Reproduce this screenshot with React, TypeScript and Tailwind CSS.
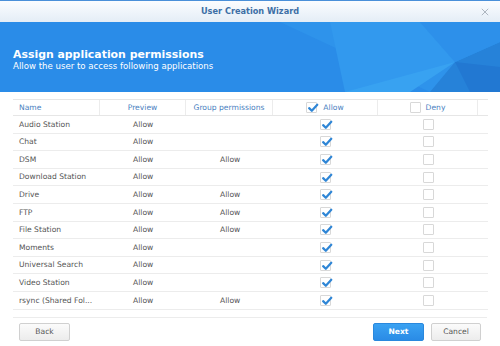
import React from "react";

const rows: [string, string, string][] = [
  ["Audio Station", "Allow", ""],
  ["Chat", "Allow", ""],
  ["DSM", "Allow", "Allow"],
  ["Download Station", "Allow", ""],
  ["Drive", "Allow", "Allow"],
  ["FTP", "Allow", "Allow"],
  ["File Station", "Allow", "Allow"],
  ["Moments", "Allow", ""],
  ["Universal Search", "Allow", ""],
  ["Video Station", "Allow", ""],
  ["rsync (Shared Fol...", "Allow", "Allow"],
];

function Box({ checked }: { checked: boolean }) {
  return (
    <span className="relative inline-block w-[11px] h-[11px] border border-[#d8d8d8] bg-white rounded-[1px]">
      {checked && (
        <svg viewBox="0 0 14 14" className="absolute left-[0px] top-[-1px] w-[12px] h-[12px]">
          <path d="M2.5 7.2 L5.6 10.2 L12 3.2" fill="none" stroke="#2f86d6" strokeWidth="2.6" strokeLinecap="round" strokeLinejoin="round" />
        </svg>
      )}
    </span>
  );
}

const grid = "grid grid-cols-[87px_86px_87px_105px_100px_10px]";

export default function App() {
  return (
    <div className="w-[500px] h-[346px] bg-white overflow-hidden flex flex-col" style={{ fontFamily: '"DejaVu Sans", Verdana, sans-serif' }}>
      {/* title bar */}
      <div className="h-[22px] border-t border-[#4a90d9] bg-gradient-to-b from-[#fbfdff] to-[#e4edf6] relative flex items-center justify-center shrink-0">
        <span className="text-[8.2px] font-bold text-[#3d6fa6]">User Creation Wizard</span>
        <svg viewBox="0 0 10 10" className="absolute right-[11px] top-[7px] w-[8px] h-[8px]">
          <path d="M1 1 L9 9 M9 1 L1 9" stroke="#a9b3bd" strokeWidth="1.2" />
        </svg>
      </div>
      {/* banner */}
      <div className="relative h-[70px] bg-[#2a8ce8] shrink-0 overflow-hidden flex flex-col justify-center px-[13px] pt-[4px]">
        <svg viewBox="0 0 500 70" className="absolute inset-0 w-[500px] h-[70px]" preserveAspectRatio="none">
          <polygon points="280,0 500,0 500,70 430,70" fill="#2e93eb" />
          <polygon points="330,0 420,0 455,40 380,70 345,70" fill="#3299ee" />
          <polygon points="455,40 500,20 500,70 430,70" fill="#2682d9" />
          <polygon points="345,70 455,40 410,70" fill="#38a2f1" />
          <polygon points="420,0 500,0 500,20 455,40" fill="#2d90ea" />
          <polygon points="455,40 470,70 500,70 500,45" fill="#2278d2" />
        </svg>
        <div className="relative text-white text-[10.9px] font-bold leading-[13px]">Assign application permissions</div>
        <div className="relative text-white text-[8.6px] leading-[10px]">Allow the user to access following applications</div>
      </div>
      {/* table */}
      <div className="px-[13px] pt-[7px] flex-1">
        <div className="w-[475px] text-[7.6px]">
          <div className={`${grid} h-[17px] border-y border-[#e6e6e6] text-[#4a7fc1]`}>
            <div className="flex items-center pl-[6px] border-r border-[#ececec]">Name</div>
            <div className="flex items-center justify-center border-r border-[#ececec]">Preview</div>
            <div className="flex items-center justify-center border-r border-[#ececec] whitespace-nowrap">Group permissions</div>
            <div className="flex items-center justify-center gap-[6px] border-r border-[#ececec]">
              <Box checked />
              <span>Allow</span>
            </div>
            <div className="flex items-center justify-center gap-[5px] border-r border-[#ececec]">
              <Box checked={false} />
              <span>Deny</span>
            </div>
            <div />
          </div>
          {rows.map(([name, prev, grp]) => (
            <div key={name} className={`${grid} h-[17.6px] border-b border-[#ececec] text-[#555]`}>
              <div className="flex items-center pl-[6px] whitespace-nowrap">{name}</div>
              <div className="flex items-center pl-[33px]">{prev}</div>
              <div className="flex items-center pl-[34px]">{grp}</div>
              <div className="flex items-center justify-center"><Box checked /></div>
              <div className="flex items-center justify-center pl-[1px]"><Box checked={false} /></div>
              <div />
            </div>
          ))}
        </div>
      </div>
      {/* footer */}
      <div className="mx-[13px] border-t border-[#ececec] h-[29px] flex items-center justify-between px-[6px] shrink-0">
        <button className="w-[51px] h-[18px] rounded-[2px] border border-[#d0d0d0] bg-gradient-to-b from-[#fbfbfb] to-[#ececec] text-[7.6px] text-[#555]">Back</button>
        <div className="flex gap-[7px]">
          <button className="w-[51px] h-[18px] rounded-[2px] border border-[#2a88dd] bg-gradient-to-b from-[#3aa2f2] to-[#2a8be6] text-[7.6px] font-bold text-white">Next</button>
          <button className="w-[50px] h-[18px] rounded-[2px] border border-[#d0d0d0] bg-gradient-to-b from-[#fbfbfb] to-[#ececec] text-[7.6px] text-[#555]">Cancel</button>
        </div>
      </div>
    </div>
  );
}
